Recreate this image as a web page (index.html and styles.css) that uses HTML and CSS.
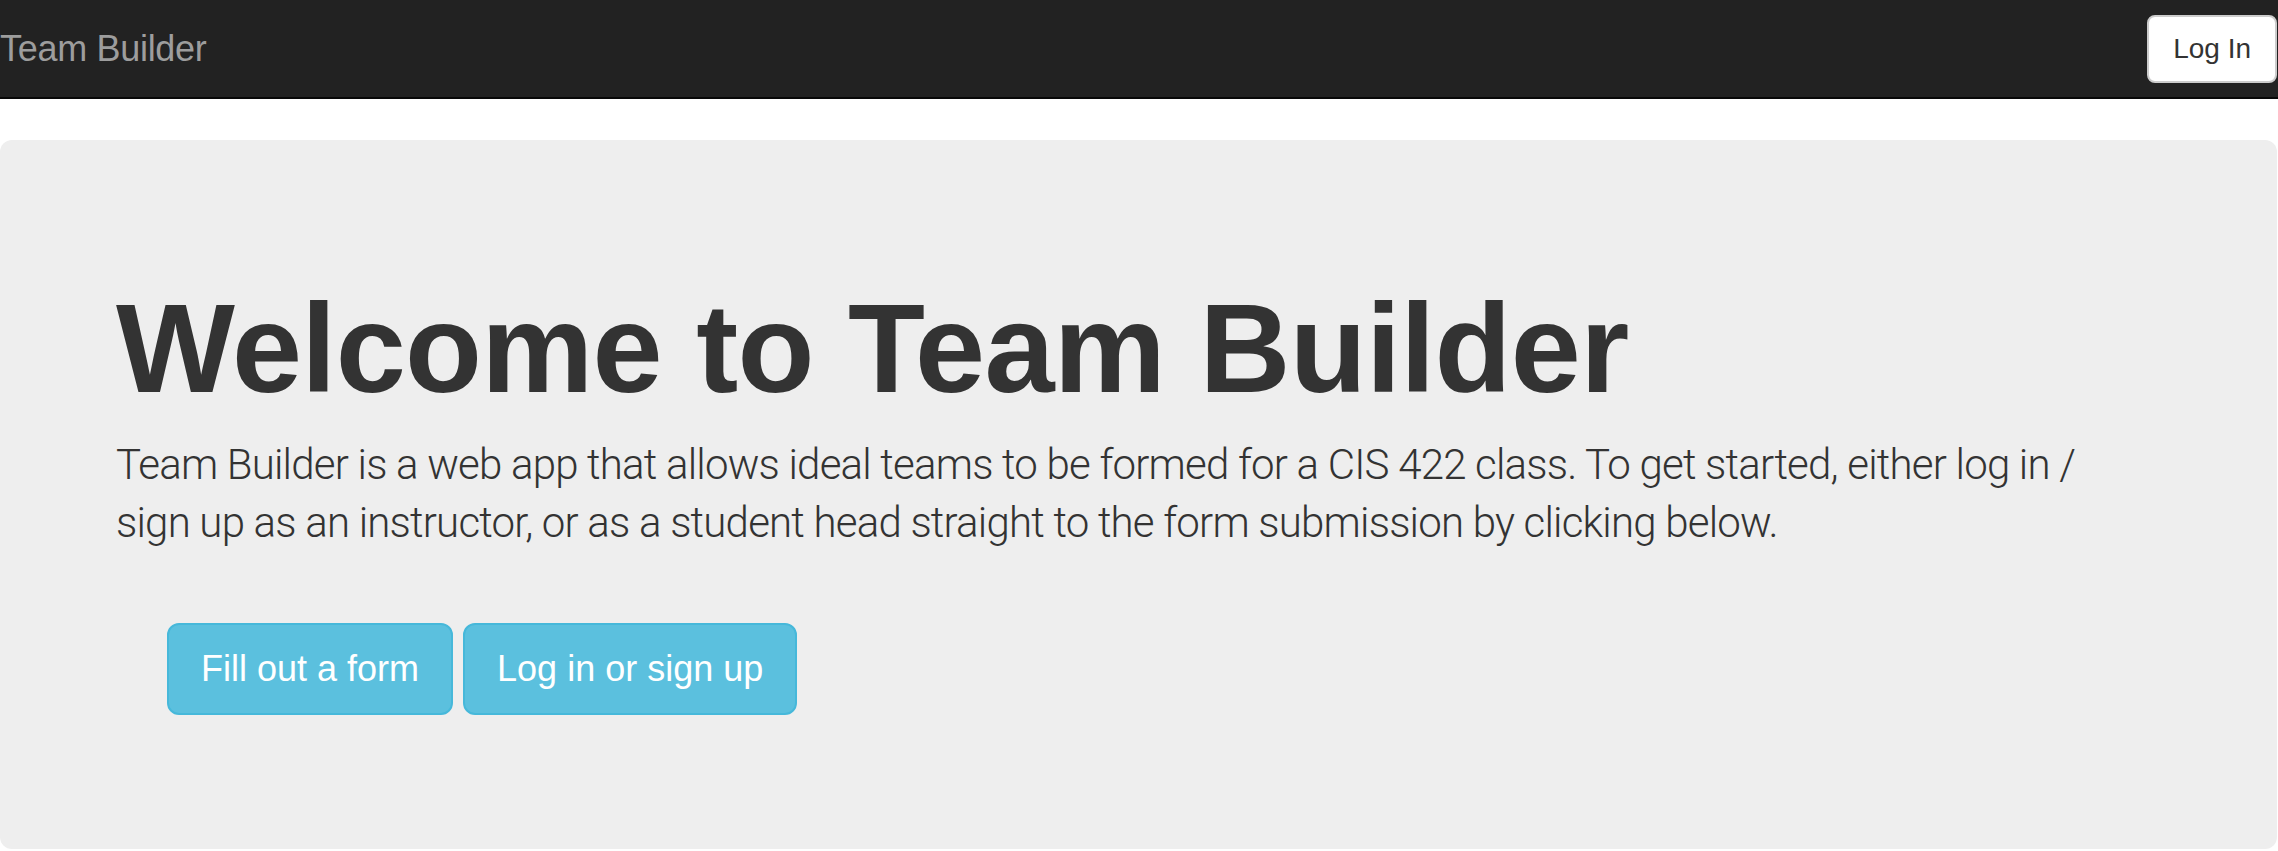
FILE: index.html
```html
<!DOCTYPE html>
<html lang="en">
<head>
<meta charset="utf-8">
<title>Team Builder</title>
<link rel="stylesheet" href="styles.css">
</head>
<body>
<nav class="navbar">
  <a class="brand" href="#">Team Builder</a>
  <button class="btn btn-default" type="button">Log In</button>
</nav>
<main class="jumbotron">
  <h1 class="title">Welcome to Team Builder</h1>
  <p class="lead">Team Builder is a web app that allows ideal teams to be formed for a CIS 422 class. To get started, either log in / sign up as an instructor, or as a student head straight to the form submission by clicking below.</p>
  <div class="actions">
    <button class="btn btn-info" type="button">Fill out a form</button>
    <button class="btn btn-info" type="button">Log in or sign up</button>
  </div>
</main>
</body>
</html>
```

FILE: styles.css
```css
html, body {
  margin: 0;
  padding: 0;
  background: #fff;
}

body {
  font-family: "Liberation Sans", Arial, sans-serif;
  color: #333;
  overflow: hidden;
}

.navbar {
  display: flex;
  justify-content: space-between;
  align-items: center;
  height: 97px;
  background: #222;
  border-bottom: 2px solid #080808;
  padding: 0 1px 0 0;
}

.brand {
  font-size: 36px;
  line-height: 40px;
  letter-spacing: -0.3px;
  color: #9d9d9d;
  text-decoration: none;
  margin-left: 0;
}

.btn {
  font-family: "Liberation Sans", Arial, sans-serif;
  border-style: solid;
  border-width: 2px;
  cursor: pointer;
  white-space: nowrap;
}

.btn-default {
  font-size: 28px;
  line-height: 40px;
  padding: 12px 24px;
  border-color: #ccc;
  border-radius: 8px;
  background: #fff;
  color: #333;
}

.jumbotron {
  margin: 41px 1px 0 0;
  background: #eee;
  border-radius: 12px;
  padding: 140px 150px 134px 116px;
}

.title {
  margin: 0 0 17px;
  font-size: 126px;
  line-height: 1.1;
  font-weight: 700;
  letter-spacing: -0.7px;
  color: #333;
}

.lead {
  margin: 0 0 70px;
  font-family: "Roboto", "Liberation Sans", sans-serif;
  font-weight: 300;
  font-size: 42px;
  line-height: 58.8px;
  letter-spacing: -0.8px;
  color: #333;
}

.actions {
  display: flex;
  gap: 10px;
  padding-left: 51px;
}

.btn-info {
  font-size: 36px;
  line-height: 48px;
  padding: 20px 32px;
  border-color: #46b8da;
  border-radius: 12px;
  background: #5bc0de;
  color: #fff;
}
```
